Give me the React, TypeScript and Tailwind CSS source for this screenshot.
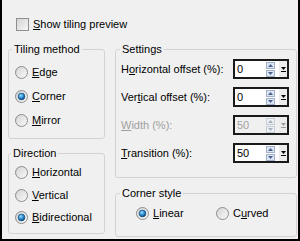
import React from "react";

const Radio = ({ checked }: { checked?: boolean }) => (
  <svg width="13" height="13" viewBox="0 0 13 13" className="shrink-0">
    <defs>
      <linearGradient id="rg" x1="0" y1="0" x2="1" y2="1">
        <stop offset="0" stopColor="#d2d2d2" />
        <stop offset="1" stopColor="#fbfbfb" />
      </linearGradient>
      <radialGradient id="rd" cx="0.4" cy="0.35" r="0.75">
        <stop offset="0" stopColor="#9be0ff" />
        <stop offset="0.55" stopColor="#1f7fc8" />
        <stop offset="1" stopColor="#0b3a66" />
      </radialGradient>
    </defs>
    <circle cx="6.5" cy="6.5" r="6" fill="url(#rg)" stroke="#8b8d8f" />
    {checked && <circle cx="6.5" cy="6.5" r="3.4" fill="url(#rd)" stroke="#17456f" strokeWidth="0.6" />}
  </svg>
);

const RadioRow = ({ checked, pre, u, post, className }: { checked?: boolean; pre?: string; u: string; post: string; className?: string }) => (
  <div className={"flex items-center h-[13px] gap-[4px] " + (className || "")}>
    <Radio checked={checked} />
    <span>
      {pre}
      <span className="underline underline-offset-1">{u}</span>
      {post}
    </span>
  </div>
);

const SpinArrow = ({ up, disabled }: { up?: boolean; disabled?: boolean }) => (
  <div className={"w-[9px] h-[7px] border flex items-center justify-center " + (disabled ? "border-[#c4ccd6] bg-[#eef1f5]" : "border-[#9fb0c8] bg-[#dde7f4]")}>
    <svg width="5" height="3" viewBox="0 0 5 3">
      {up ? (
        <polygon points="0,3 5,3 2.5,0" fill={disabled ? "#a8b0bc" : "#4a5f8c"} />
      ) : (
        <polygon points="0,0 5,0 2.5,3" fill={disabled ? "#a8b0bc" : "#4a5f8c"} />
      )}
    </svg>
  </div>
);

const NumInput = ({ value, disabled }: { value: string; disabled?: boolean }) => (
  <div className={"w-[56px] h-[20px] border-2 border-[#1a1a1a] flex items-stretch " + (disabled ? "bg-[#f0f0f0]" : "bg-white")}>
    <div className={"flex-1 pl-[2px] flex items-center " + (disabled ? "text-[#a3a3a3]" : "text-black")}>{value}</div>
    <div className="flex flex-col justify-center gap-[1px] mr-[4px]">
      <SpinArrow up disabled={disabled} />
      <SpinArrow disabled={disabled} />
    </div>
    <div className="w-[8px] bg-[#ececec] flex flex-col items-center justify-center gap-[1px]">
      <svg width="5" height="3" viewBox="0 0 5 3">
        <polygon points="0,0 5,0 2.5,3" fill={disabled ? "#9a9a9a" : "#000"} />
      </svg>
      <div className={"w-[5px] h-[1px] " + (disabled ? "bg-[#9a9a9a]" : "bg-black")} />
    </div>
  </div>
);

const SettingRow = ({ pre, u, post, value, disabled }: { pre?: string; u: string; post: string; value: string; disabled?: boolean }) => (
  <div className="flex items-center justify-between h-[20px]">
    <span className={disabled ? "text-[#a0a0a0]" : "text-black"}>
      {pre}
      <span className="underline underline-offset-1">{u}</span>
      {post}
    </span>
    <NumInput value={value} disabled={disabled} />
  </div>
);

export default function App() {
  return (
    <div className="w-[300px] h-[241px] bg-[#f0f0f0] border-l-2 border-r-2 border-b-2 border-black font-['Liberation_Sans',Arial,sans-serif] text-[11px] leading-[13px] text-black">
      <div className="pt-[18px] pl-[14px] flex items-center h-[31px] gap-[4px]">
        <div className="w-[13px] h-[13px] border border-[#8e8f8f] bg-gradient-to-br from-[#d4d4d4] to-[#f7f7f7]" />
        <span>
          <span className="underline underline-offset-1">S</span>how tiling preview
        </span>
      </div>
      <div className="mt-[12px] pl-[6px] flex gap-[10px]">
        <div className="w-[97px] flex flex-col">
          <fieldset className="h-[96px] border border-[#d3d3d3] rounded-[3px]">
            <legend className="ml-[3px] px-[2px] leading-[13px]">Tiling method</legend>
            <div className="pl-[6px] pt-[10px] flex flex-col gap-[11px]">
              <RadioRow u="E" post="dge" />
              <RadioRow checked u="C" post="orner" />
              <RadioRow u="M" post="irror" />
            </div>
          </fieldset>
          <fieldset className="mt-[8px] h-[87px] border border-[#d3d3d3] rounded-[3px]">
            <legend className="ml-[2px] px-[2px] leading-[13px]">Direction</legend>
            <div className="pl-[6px] pt-[6px] flex flex-col">
              <RadioRow u="H" post="orizontal" />
              <RadioRow u="V" post="ertical" className="mt-[10px]" />
              <RadioRow checked u="B" post="idirectional" className="mt-[9px]" />
            </div>
          </fieldset>
        </div>
        <div className="w-[182px] flex flex-col">
          <fieldset className="h-[135px] border border-[#d3d3d3] rounded-[3px]">
            <legend className="ml-[4px] px-[2px] leading-[13px]">Settings</legend>
            <div className="pl-[5px] pr-[7px] pt-[3px] flex flex-col gap-[8px]">
              <SettingRow pre="H" u="o" post="rizontal offset (%):" value="0" />
              <SettingRow pre="Ver" u="t" post="ical offset (%):" value="0" />
              <SettingRow u="W" post="idth (%):" value="50" disabled />
              <SettingRow u="T" post="ransition (%):" value="50" />
            </div>
          </fieldset>
          <fieldset className="mt-[9px] h-[50px] border border-[#d3d3d3] rounded-[3px]">
            <legend className="ml-[4px] px-[2px] leading-[13px]">Corner style</legend>
            <div className="pl-[20px] pt-[7px] flex items-center">
              <RadioRow checked u="L" post="inear" className="w-[80px]" />
              <RadioRow pre="C" u="u" post="rved" />
            </div>
          </fieldset>
        </div>
      </div>
    </div>
  );
}
